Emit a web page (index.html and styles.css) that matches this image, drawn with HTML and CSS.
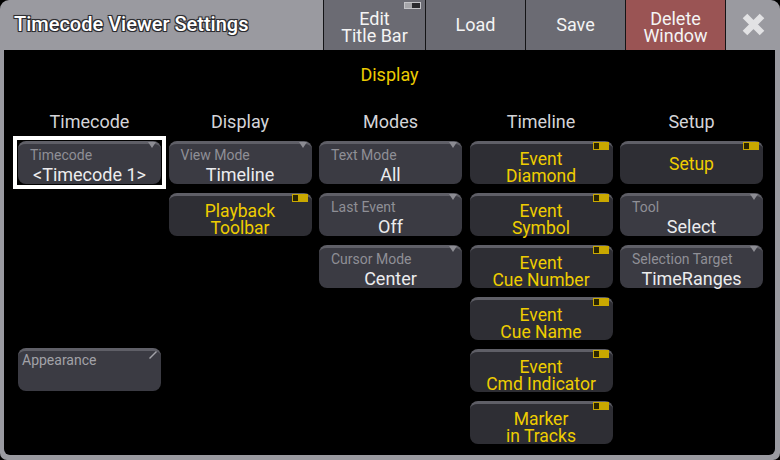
FILE: index.html
```html
<!DOCTYPE html>
<html lang="en">
<head>
    <meta charset="UTF-8">
    <title>Timecode Viewer Settings</title>
    <link rel="stylesheet" href="styles.css">
</head>
<body>
    <div class="window">
        <header class="titlebar">
            <div class="title">Timecode Viewer Settings</div>
            <div class="tb-btn tb-edit two-line">Edit<br>Title Bar<span class="tb-toggle"></span></div>
            <div class="tb-btn">Load</div>
            <div class="tb-btn">Save</div>
            <div class="tb-btn danger two-line">Delete<br>Window</div>
            <div class="tb-close">
                <svg width="23" height="23" viewBox="0 0 23 23">
                    <path d="M3 3 L20 20 M20 3 L3 20" stroke="#e2e2e4" stroke-width="6.5" fill="none"/>
                </svg>
            </div>
        </header>

        <main class="content">
            <div class="section-title">Display</div>
            <div class="columns">
                <div class="col">
                    <div class="col-head">Timecode</div>
                    <div class="btn select selected">
                        <span class="lbl">Timecode</span>
                        <span class="val">&lt;Timecode 1&gt;</span>
                    </div>
                    <div class="btn edit appearance">
                        <span class="lbl">Appearance</span>
                        <svg class="pencil" width="8" height="8" viewBox="0 0 8 8">
                            <path d="M0.5 7.5 L7.5 0.5" stroke="#a4a4aa" stroke-width="1.4"/>
                        </svg>
                    </div>
                </div>

                <div class="col">
                    <div class="col-head">Display</div>
                    <div class="btn select">
                        <span class="lbl">View Mode</span>
                        <span class="val">Timeline</span>
                    </div>
                    <div class="btn toggle">Playback<br>Toolbar</div>
                </div>

                <div class="col">
                    <div class="col-head">Modes</div>
                    <div class="btn select">
                        <span class="lbl">Text Mode</span>
                        <span class="val">All</span>
                    </div>
                    <div class="btn select">
                        <span class="lbl">Last Event</span>
                        <span class="val">Off</span>
                    </div>
                    <div class="btn select">
                        <span class="lbl">Cursor Mode</span>
                        <span class="val">Center</span>
                    </div>
                </div>

                <div class="col">
                    <div class="col-head">Timeline</div>
                    <div class="btn toggle">Event<br>Diamond</div>
                    <div class="btn toggle">Event<br>Symbol</div>
                    <div class="btn toggle">Event<br>Cue Number</div>
                    <div class="btn toggle">Event<br>Cue Name</div>
                    <div class="btn toggle">Event<br>Cmd Indicator</div>
                    <div class="btn toggle">Marker<br>in Tracks</div>
                </div>

                <div class="col">
                    <div class="col-head">Setup</div>
                    <div class="btn toggle single">Setup</div>
                    <div class="btn select">
                        <span class="lbl">Tool</span>
                        <span class="val">Select</span>
                    </div>
                    <div class="btn select">
                        <span class="lbl">Selection Target</span>
                        <span class="val">TimeRanges</span>
                    </div>
                </div>
            </div>
        </main>
    </div>
</body>
</html>
```

FILE: styles.css
```css
body { margin: 0; background: #000; font-family: Roboto, "Liberation Sans", sans-serif; }

.window {
    width: 780px;
    height: 460px;
    background: #9a9aa0;
    border-radius: 9px 9px 7px 7px;
    display: flex;
    flex-direction: column;
    overflow: hidden;
}

/* title bar */
.titlebar { height: 50px; display: flex; flex-shrink: 0; }
.title {
    width: 309px;
    padding: 0 0 3px 14px;
    display: flex;
    align-items: center;
    font-size: 20px;
    font-weight: 500;
    color: #fff;
    text-shadow: 1px 1px 0 #2c2c30, -1px -1px 0 #2c2c30, 1px -1px 0 #2c2c30, -1px 1px 0 #2c2c30, 0 0 2px #222;
}
.tb-btn {
    position: relative;
    width: 100px;
    box-sizing: border-box;
    padding-bottom: 2px;
    border-left: 1px solid #141416;
    background: #6b6b73;
    color: #f4f4f4;
    font-size: 18px;
    line-height: 17px;
    text-align: center;
    display: flex;
    align-items: center;
    justify-content: center;
}
.tb-btn.tb-edit { width: 102px; }
.tb-btn.two-line { padding-top: 6px; }
.tb-btn.danger { background: #9a5454; }
.tb-toggle {
    position: absolute;
    top: 2px;
    right: 4px;
    width: 17px;
    height: 7px;
    box-sizing: border-box;
    border: 1px solid #c4c4c8;
    background: linear-gradient(90deg, #a6a6aa 0 7px, #2a2a2e 7px);
}
.tb-close {
    flex: 1;
    border-left: 1px solid #141416;
    display: flex;
    align-items: center;
    justify-content: center;
    padding-bottom: 2px;
}

/* content */
.content {
    flex: 1;
    margin: 0 5px 5px 4px;
    background: #000;
    border-radius: 0 0 6px 6px;
    padding-top: 13px;
}
.section-title {
    text-align: center;
    color: #eccb00;
    font-size: 18px;
    line-height: 24px;
}
.columns {
    display: grid;
    grid-template-columns: repeat(5, 143px);
    column-gap: 7.5px;
    padding-left: 14px;
    margin-top: 23px;
}
.col-head {
    text-align: center;
    color: #d4d4d8;
    font-size: 18px;
    line-height: 24px;
    margin-bottom: 7px;
}

/* buttons */
.btn {
    position: relative;
    height: 43px;
    box-sizing: border-box;
    border-top: 3px solid #5f5f67;
    border-radius: 8px;
}
.btn + .btn { margin-top: 9px; }

.select { background: #3b3b43; }
.select::after {
    content: "";
    position: absolute;
    top: -2px;
    right: 5px;
    border-left: 4.5px solid transparent;
    border-right: 4.5px solid transparent;
    border-top: 6px solid #8c8c93;
}
.lbl {
    display: block;
    padding: 3px 0 0 12px;
    font-size: 14px;
    line-height: 16px;
    color: #8f8f96;
}
.val {
    display: block;
    margin-top: 2px;
    text-align: center;
    font-size: 18px;
    line-height: 20px;
    color: #ececee;
}
.selected::before {
    content: "";
    position: absolute;
    top: -8px;
    left: -5px;
    right: -5px;
    bottom: -5px;
    border: 4px solid #fff;
}

.toggle {
    background: #2e2e34;
    color: #efcd00;
    font-size: 17.5px;
    line-height: 17px;
    text-align: center;
    display: flex;
    flex-direction: column;
    justify-content: center;
    padding-top: 7px;
}
.toggle.single { padding-top: 0; }
.toggle::after {
    content: "";
    position: absolute;
    top: -2px;
    right: 4px;
    width: 16px;
    height: 8px;
    box-sizing: border-box;
    border: 1.5px solid #c9a800;
    background: linear-gradient(90deg, #2a2500 0 5px, #c9a800 5px);
}

.appearance { margin-top: 164px !important; background: #3b3b43; }
.appearance .lbl { padding: 1px 0 0 4px; color: #a2a2a8; }
.pencil { position: absolute; top: 0; right: 4px; }
```
